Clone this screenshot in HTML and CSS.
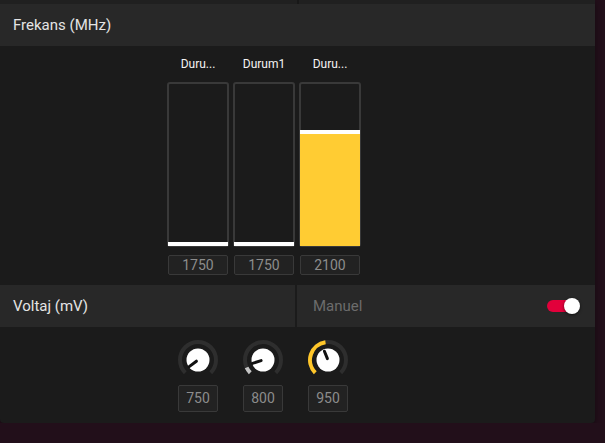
FILE: index.html
```html
<!DOCTYPE html>
<html lang="tr">
<head>
    <meta charset="UTF-8">
    <meta name="viewport" content="width=device-width, initial-scale=1.0">
    <title>Frekans / Voltaj</title>
    <link rel="stylesheet" href="styles.css">
</head>
<body>
    <div class="panel">
        <div class="top-strip">
            <div class="strip-half"></div>
            <div class="strip-half"></div>
        </div>

        <div class="section-head">Frekans (MHz)</div>

        <div class="freq-body">
            <div class="bar-col">
                <div class="bar-label">Duru...</div>
                <div class="bar"><div class="bar-fill" style="height: 0px;"></div></div>
                <div class="value-box">1750</div>
            </div>
            <div class="bar-col">
                <div class="bar-label">Durum1</div>
                <div class="bar"><div class="bar-fill" style="height: 0px;"></div></div>
                <div class="value-box">1750</div>
            </div>
            <div class="bar-col">
                <div class="bar-label">Duru...</div>
                <div class="bar"><div class="bar-fill" style="height: 112px;"></div></div>
                <div class="value-box">2100</div>
            </div>
        </div>

        <div class="split-head">
            <div class="head-cell">Voltaj (mV)</div>
            <div class="head-cell mode-cell">
                <span class="mode-text">Manuel</span>
                <span class="toggle"><span class="toggle-knob"></span></span>
            </div>
        </div>

        <div class="knob-body">
            <div class="knob-col">
                <svg class="knob" width="40" height="40" viewBox="0 0 40 40">
                    <path class="knob-track" d="M7.27 32.73 A18 18 0 1 1 32.73 32.73"/>
                    <circle class="knob-face" cx="20" cy="20" r="11.5"/>
                    <line class="knob-pointer" x1="18.4" y1="21.2" x2="11.2" y2="26.6"/>
                </svg>
                <div class="knob-value">750</div>
            </div>
            <div class="knob-col">
                <svg class="knob" width="40" height="40" viewBox="0 0 40 40">
                    <path class="knob-track" d="M7.27 32.73 A18 18 0 1 1 32.73 32.73"/>
                    <path class="knob-level gray" d="M7.27 32.73 A18 18 0 0 1 3.6 27.5"/>
                    <circle class="knob-face" cx="20" cy="20" r="11.5"/>
                    <line class="knob-pointer" x1="18.1" y1="20.6" x2="9.5" y2="23.4"/>
                </svg>
                <div class="knob-value">800</div>
            </div>
            <div class="knob-col">
                <svg class="knob" width="40" height="40" viewBox="0 0 40 40">
                    <path class="knob-track" d="M7.27 32.73 A18 18 0 1 1 32.73 32.73"/>
                    <path class="knob-level yellow" d="M7.27 32.73 A18 18 0 0 1 17.5 2.2"/>
                    <circle class="knob-face" cx="20" cy="20" r="11.5"/>
                    <line class="knob-pointer" x1="19.4" y1="18.6" x2="16.4" y2="11.2"/>
                </svg>
                <div class="knob-value">950</div>
            </div>
        </div>
    </div>
</body>
</html>
```

FILE: styles.css
```css
body {
    margin: 0;
    padding: 0;
    background-color: #220f1a;
    font-family: Roboto, "Liberation Sans", sans-serif;
    color: #e4e4e4;
}

.panel {
    width: 595px;
    height: 423px;
    background-color: #1b1b1b;
    border-radius: 0 0 4px 4px;
    overflow: hidden;
    box-shadow: 0 2px 6px rgba(0, 0, 0, 0.4);
}

.top-strip {
    height: 4px;
    display: flex;
    gap: 2px;
    background-color: #181818;
}

.strip-half {
    flex: 1;
    background-color: #202020;
}

.section-head {
    height: 42px;
    display: flex;
    align-items: center;
    padding-left: 13px;
    background-color: #282828;
    font-size: 15px;
}

/* frekans barlari */
.freq-body {
    height: 239px;
    box-sizing: border-box;
    padding: 11px 0 0 167px;
    display: flex;
    gap: 4px;
}

.bar-col {
    width: 62px;
    display: flex;
    flex-direction: column;
    align-items: center;
}

.bar-label {
    height: 14px;
    line-height: 14px;
    font-size: 12px;
    color: #f4f4f4;
    margin-bottom: 11px;
}

.bar {
    width: 62px;
    height: 165px;
    box-sizing: border-box;
    border: 2px solid #393939;
    border-radius: 3px;
    display: flex;
    flex-direction: column;
    justify-content: flex-end;
}

.bar-fill {
    margin: 0 -1px -1px -1px;
    border-top: 4px solid #fff;
    background-color: #ffcc33;
}

.value-box {
    width: 60px;
    height: 20px;
    box-sizing: border-box;
    margin-top: 8px;
    border: 1px solid #393939;
    border-radius: 2px;
    background-color: #222;
    color: #8c8c8c;
    font-size: 14px;
    line-height: 18px;
    text-align: center;
}

/* voltaj */
.split-head {
    height: 42px;
    display: flex;
    gap: 2px;
}

.head-cell {
    background-color: #282828;
    display: flex;
    align-items: center;
    font-size: 15px;
}

.head-cell:first-child {
    width: 295px;
    padding-left: 13px;
    box-sizing: border-box;
}

.mode-cell {
    flex: 1;
    justify-content: space-between;
    padding: 0 16px 0 16px;
}

.mode-text {
    color: #6c6c6c;
}

.toggle {
    position: relative;
    width: 30px;
    height: 12px;
    border-radius: 6px;
    background-color: #e2003b;
    margin-right: 2px;
}

.toggle-knob {
    position: absolute;
    right: -3px;
    top: -2px;
    width: 16px;
    height: 16px;
    border-radius: 50%;
    background-color: #fff;
    box-shadow: 0 1px 3px rgba(0, 0, 0, 0.6);
}

.knob-body {
    height: 96px;
    box-sizing: border-box;
    padding: 13px 0 0 178px;
    display: flex;
    gap: 25px;
}

.knob-col {
    width: 40px;
    display: flex;
    flex-direction: column;
    align-items: center;
}

.knob {
    display: block;
}

.knob-track {
    fill: none;
    stroke: #2e2e2e;
    stroke-width: 4;
}

.knob-level {
    fill: none;
    stroke-width: 4;
}

.knob-level.gray {
    stroke: #c4c4c4;
}

.knob-level.yellow {
    stroke: #ffc629;
}

.knob-face {
    fill: #fff;
}

.knob-pointer {
    stroke: #111;
    stroke-width: 3;
    stroke-linecap: round;
}

.knob-value {
    width: 40px;
    height: 27px;
    box-sizing: border-box;
    margin-top: 5px;
    border: 1px solid #393939;
    border-radius: 2px;
    background-color: #222;
    color: #8c8c8c;
    font-size: 14px;
    line-height: 25px;
    text-align: center;
}
```
